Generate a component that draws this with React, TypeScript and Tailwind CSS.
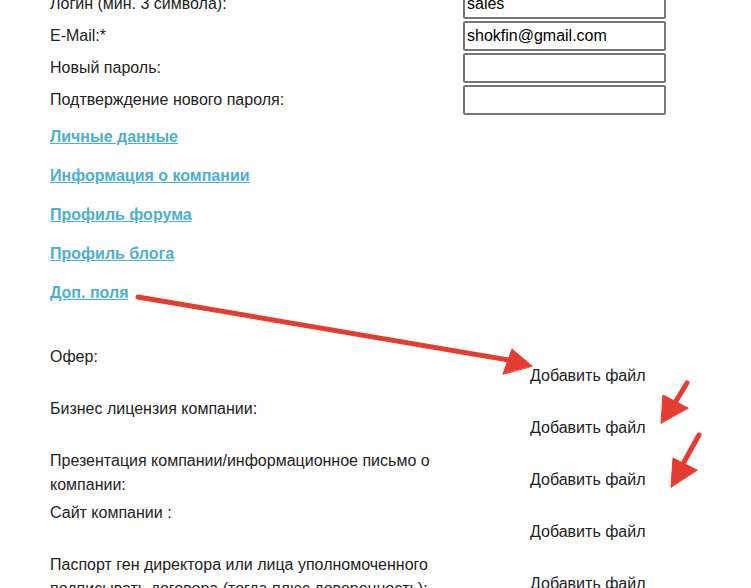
const account = [
  { label: "Логин (мин. 3 символа):", value: "sales" },
  { label: "E-Mail:*", value: "shokfin@gmail.com" },
  { label: "Новый пароль:", value: "" },
  { label: "Подтверждение нового пароля:", value: "" },
];

const sections = [
  "Личные данные",
  "Информация о компании",
  "Профиль форума",
  "Профиль блога",
  "Доп. поля",
];

const files = [
  "Офер:",
  "Бизнес лицензия компании:",
  "Презентация компании/информационное письмо о компании:",
  "Сайт компании :",
  "Паспорт ген директора или лица уполномоченного подписывать договора (тогда плюс доверенность):",
];

function Arrows() {
  return (
    <svg className="pointer-events-none absolute left-0 top-0" width={751} height={588}>
      <g fill="#e53b30" stroke="#e53b30" strokeWidth={5} strokeLinecap="round">
        <line x1={138} y1={297} x2={514} y2={361} />
        <polygon points="532,366 512,349 503,374" strokeWidth={1} />
        <line x1={687} y1={383} x2={673} y2={406} />
        <polygon points="661,423 663,395 688,408" strokeWidth={1} />
        <line x1={699} y1={435} x2={684} y2={462} />
        <polygon points="671,487 673,458 697,470" strokeWidth={1} />
      </g>
    </svg>
  );
}

export default function App() {
  return (
    <div
      className="relative h-[588px] w-[751px] overflow-hidden bg-white pl-[50px] text-[16px] text-[#222]"
      style={{ fontFamily: '"Liberation Sans", Arial, sans-serif' }}
    >
      {/* account fields */}
      <div className="-mt-[11px] flex flex-col gap-[2px]">
        {account.map((f) => (
          <div key={f.label} className="flex items-center">
            <span className="w-[413px] leading-[24px]">{f.label}</span>
            <div className="h-[30px] w-[203px] rounded-[2px] border-2 border-[#767676] px-[2px] leading-[26px] text-black">
              {f.value}
            </div>
          </div>
        ))}
      </div>

      {/* profile sections */}
      <div className="mt-[13px] flex flex-col gap-[21px]">
        {sections.map((s) => (
          <a
            key={s}
            href="#"
            className="self-start text-[16px] font-bold leading-[18px] text-[#4bafcf] underline"
          >
            {s}
          </a>
        ))}
      </div>

      {/* extra fields */}
      <div className="mt-[43px] flex flex-col">
        {files.map((f) => (
          <div key={f} className="flex h-[52px] items-start">
            <span className="w-[413px] pr-[20px] leading-[24px]">{f}</span>
            <span className="pl-[67px] pt-[19px] leading-[24px] whitespace-nowrap">Добавить файл</span>
          </div>
        ))}
      </div>

      <Arrows />
    </div>
  );
}
